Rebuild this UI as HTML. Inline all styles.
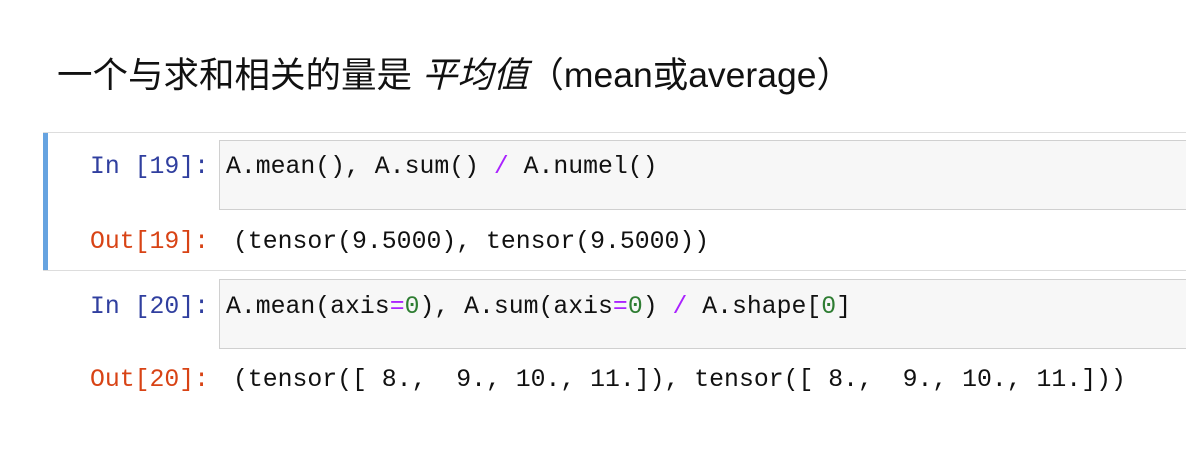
<!DOCTYPE html>
<html><head><meta charset="utf-8"><style>
body{margin:0;width:1186px;height:469px;background:#fff;position:relative;overflow:hidden;font-family:"Liberation Mono",monospace;}
.t{position:absolute;left:57px;top:54px;font-family:"Liberation Sans","Noto Sans CJK SC",sans-serif;font-size:35.5px;line-height:42px;color:#111;white-space:nowrap}
.t i{font-style:italic}
.cell{position:absolute;left:43px;right:0;border-top:1px solid #ddd;border-bottom:1px solid #ddd}
.bar{position:absolute;left:0;top:0;bottom:0;width:5px;background:#66a3e0}
.box{position:absolute;left:219px;right:0;height:68px;background:#f7f7f7;border:1px solid #d0d0d0;border-right:none}
.m{position:absolute;font-size:24.8px;white-space:pre;color:#111;line-height:30px}
.in{color:#303f9f}.out{color:#d84315}
.g{color:#2e7d32}.p{color:#aa22ff}
</style></head><body>
<div class="t">一个与求和相关的量是 <i>平均值</i>（mean或average）</div>
<div class="cell" style="top:132px;height:137px"><div class="bar"></div></div>
<div class="box" style="top:140px"></div>
<div class="m in" style="left:90px;top:152px">In [19]:</div>
<div class="m" style="left:226px;top:152px">A.mean(), A.sum() <span class="p">/</span> A.numel()</div>
<div class="m out" style="left:90px;top:227px">Out[19]:</div>
<div class="m" style="left:233px;top:227px">(tensor(9.5000), tensor(9.5000))</div>
<div class="box" style="top:279px"></div>
<div class="m in" style="left:90px;top:292px">In [20]:</div>
<div class="m" style="left:226px;top:292px">A.mean(axis<span class="p">=</span><span class="g">0</span>), A.sum(axis<span class="p">=</span><span class="g">0</span>) <span class="p">/</span> A.shape[<span class="g">0</span>]</div>
<div class="m out" style="left:90px;top:365px">Out[20]:</div>
<div class="m" style="left:233px;top:365px">(tensor([ 8.,  9., 10., 11.]), tensor([ 8.,  9., 10., 11.]))</div>
</body></html>
